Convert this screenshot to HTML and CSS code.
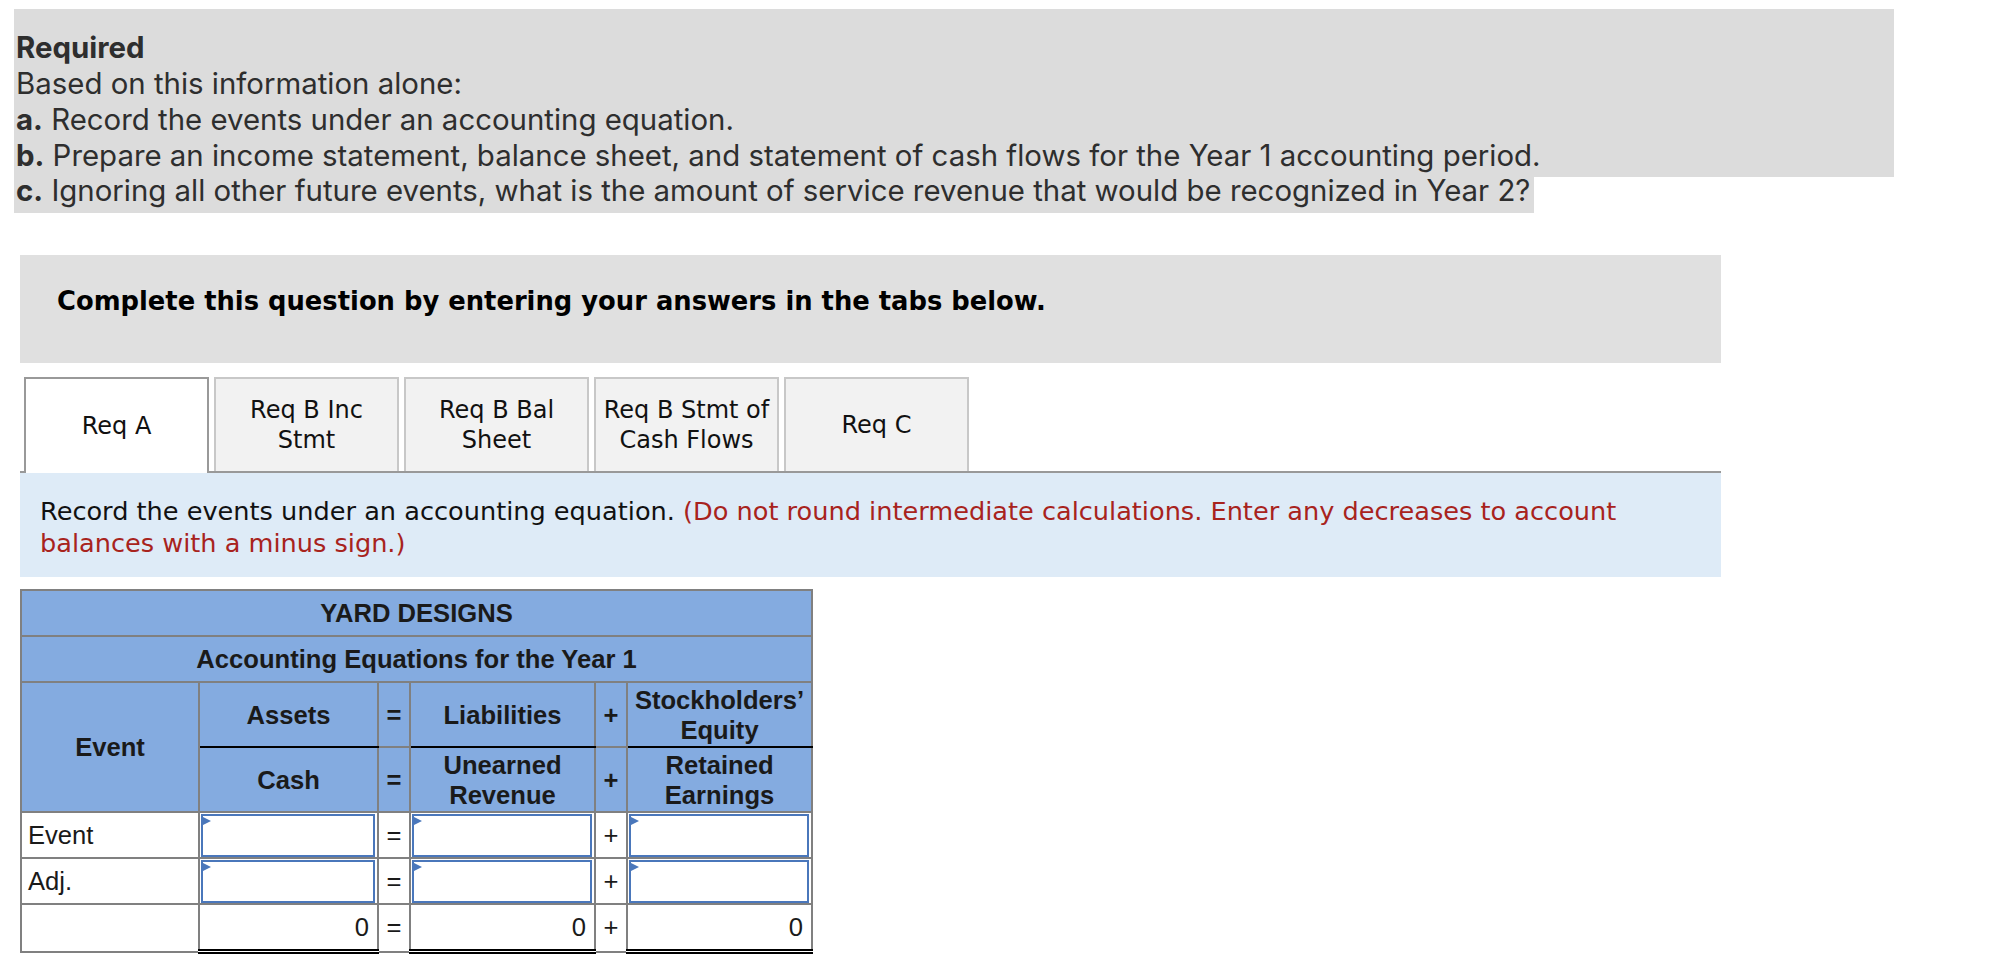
FILE: index.html
```html
<!DOCTYPE html>
<html lang="en">
<head>
    <meta charset="UTF-8">
    <title>Yard Designs - Req A</title>
    <link rel="stylesheet" href="styles.css">
</head>
<body>
<div class="required">
    <div class="reqBox">
        <div class="reqTitle">Required</div>
        <div>Based on this information alone:</div>
        <div><b>a.</b> Record the events under an accounting equation.</div>
        <div><b>b.</b> Prepare an income statement, balance sheet, and statement of cash flows for the Year 1 accounting period.</div>
    </div>
    <div class="reqLast"><b>c.</b> Ignoring all other future events, what is the amount of service revenue that would be recognized in Year 2?</div>
</div>

<div class="instructions">Complete this question by entering your answers in the tabs below.</div>

<div class="tabs">
    <div class="tab active">Req A</div>
    <div class="tab">Req B Inc<br>Stmt</div>
    <div class="tab">Req B Bal<br>Sheet</div>
    <div class="tab">Req B Stmt of<br>Cash Flows</div>
    <div class="tab">Req C</div>
</div>
<div class="tabPanel">
    <span>Record the events under an accounting equation.</span>
    <span class="hint">(Do not round intermediate calculations. Enter any decreases to account</span>
    <span class="hint">balances with a minus sign.)</span>
</div>

<table class="equation">
    <colgroup>
        <col class="colEvent">
        <col class="colAmount">
        <col class="colSign">
        <col class="colAmountWide">
        <col class="colSign">
        <col class="colAmountWide">
    </colgroup>
    <tr class="titleRow"><th colspan="6">YARD DESIGNS</th></tr>
    <tr class="titleRow"><th colspan="6">Accounting Equations for the Year 1</th></tr>
    <tr class="headRow">
        <th rowspan="2">Event</th>
        <th class="group">Assets</th>
        <th>=</th>
        <th class="group">Liabilities</th>
        <th>+</th>
        <th class="group">Stockholders’<br>Equity</th>
    </tr>
    <tr class="headRow">
        <th>Cash</th>
        <th>=</th>
        <th>Unearned<br>Revenue</th>
        <th>+</th>
        <th>Retained<br>Earnings</th>
    </tr>
    <tr class="entryRow">
        <td class="label">Event</td>
        <td><div class="field"></div></td>
        <td class="sign">=</td>
        <td><div class="field"></div></td>
        <td class="sign">+</td>
        <td><div class="field"></div></td>
    </tr>
    <tr class="entryRow">
        <td class="label">Adj.</td>
        <td><div class="field"></div></td>
        <td class="sign">=</td>
        <td><div class="field"></div></td>
        <td class="sign">+</td>
        <td><div class="field"></div></td>
    </tr>
    <tr class="totalRow">
        <td class="label"></td>
        <td class="total">0</td>
        <td class="sign">=</td>
        <td class="total">0</td>
        <td class="sign">+</td>
        <td class="total">0</td>
    </tr>
</table>
</body>
</html>
```

FILE: styles.css
```css
body {
    margin: 0;
    padding: 0;
    background-color: white;
    color: #111;
}

/* Required block */
.required {
    margin: 9px 0 0 14px;
    font-family: Inter, Lato, sans-serif;
    font-size: 29.4px;
    color: #2e2e2e;
}

.reqBox {
    width: 1880px;
    box-sizing: border-box;
    padding: 21px 0 3px 2px;
    line-height: 36px;
    background-color: #dcdcdc;
}

.reqTitle {
    font-weight: bold;
}

.reqLast {
    width: fit-content;
    padding: 0 4px 8px 2px;
    line-height: 28px;
    background-color: #dcdcdc;
}

/* Instructions */
.instructions {
    margin: 42px 0 0 20px;
    width: 1701px;
    height: 108px;
    box-sizing: border-box;
    padding: 31px 0 0 37px;
    background-color: #e0e0e0;
    font-family: "DejaVu Sans", Verdana, sans-serif;
    font-weight: bold;
    font-size: 25.8px;
    color: black;
}

/* Tabs */
.tabs {
    display: flex;
    align-items: flex-end;
    gap: 5px;
    margin: 14px 0 0 24px;
    position: relative;
    z-index: 1;
}

.tab {
    width: 185px;
    height: 94px;
    box-sizing: border-box;
    display: flex;
    align-items: center;
    justify-content: center;
    text-align: center;
    border: 2px solid #c8c8c8;
    border-bottom: none;
    background-color: #f2f2f2;
    font-family: "DejaVu Sans", Verdana, sans-serif;
    font-size: 24px;
    line-height: 30px;
    color: #111;
}

.tab.active {
    height: 96px;
    margin-bottom: -2px;
    border-color: #999;
    background-color: white;
}

.tabPanel {
    margin-left: 20px;
    width: 1701px;
    box-sizing: border-box;
    min-height: 106px;
    padding: 22px 20px 0 20px;
    border-top: 2px solid #999;
    background-color: #deebf7;
    font-family: "DejaVu Sans", Verdana, sans-serif;
    font-size: 25.6px;
    line-height: 32px;
    color: #111;
}

.hint {
    color: #a8231d;
}

/* Accounting equation table */
.equation {
    margin: 12px 0 0 20px;
    border-collapse: collapse;
    table-layout: fixed;
    width: 792px;
    font-family: "Liberation Sans", Arial, sans-serif;
    font-size: 25.6px;
    color: #1a1a1a;
}

.colEvent { width: 178px; }
.colAmount { width: 179px; }
.colSign { width: 32px; }
.colAmountWide { width: 185px; }

.equation th,
.equation td {
    border: 2px solid #808080;
    padding: 0;
}

.equation th {
    background-color: #84abe0;
    font-weight: bold;
    text-align: center;
    line-height: 30px;
}

.titleRow th {
    height: 44px;
}

.headRow th {
    height: 63px;
}

.headRow th.group {
    border-bottom: 2px solid black;
}

.entryRow td {
    height: 44px;
}

.totalRow td {
    height: 44px;
}

.label {
    padding-left: 6px !important;
    text-align: left;
}

.sign {
    text-align: center;
}

.field {
    position: relative;
    height: 43px;
    margin: 0 2px 0 1px;
    box-sizing: border-box;
    border: 2px solid #4a77bb;
    background-color: white;
}

/* small flag marking an editable cell */
.field::before {
    content: '';
    position: absolute;
    top: 0;
    left: -2px;
    border-top: 5px solid transparent;
    border-bottom: 5px solid transparent;
    border-left: 10px solid #4a77bb;
}

.total {
    text-align: right;
    padding-right: 8px !important;
    border-top: 2px solid black !important;
    border-bottom: 5px double black !important;
}
```
